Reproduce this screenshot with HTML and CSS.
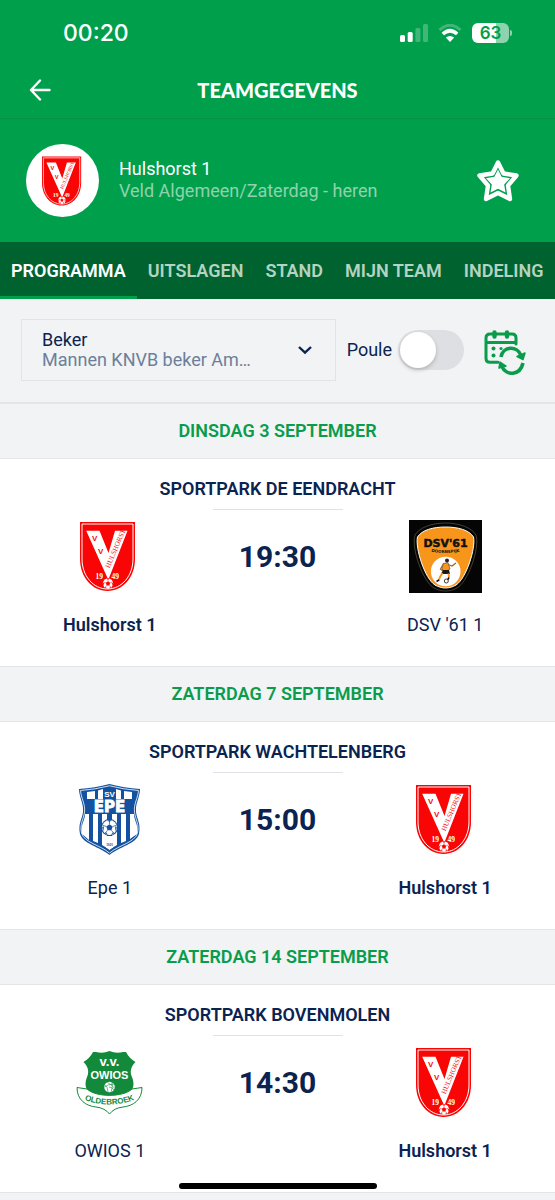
FILE: index.html
```html
<!DOCTYPE html>
<html lang="nl">
<head>
<meta charset="utf-8">
<meta name="viewport" content="width=device-width, initial-scale=1">
<title>Teamgegevens</title>
<link rel="stylesheet" href="styles.css">
</head>
<body>
<svg class="defs" aria-hidden="true">
  <defs>
    <g id="ball">
      <circle r="5.4" fill="#fff"/>
      <path d="M0-2.4 2.3-.7 1.4 2H-1.4L-2.3-.7Z" fill="currentColor"/>
      <path d="M0-5.4V-2.4M5.1-1.7 2.3-.7M3.2 4.4 1.4 2M-3.2 4.4-1.4 2M-5.1-1.7-2.3-.7" stroke="currentColor" stroke-width=".5"/>
      <path d="M-1.8-5.2h3.6L0-4ZM5.3-.2 4.4 2.8 4-.9ZM-5.3-.2-4.4 2.8-4-.9ZM1 5.3 3.6 4 2.6 3.4ZM-1 5.3-3.6 4-2.6 3.4Z" fill="currentColor"/>
    </g>
    <symbol id="hulshorst" viewBox="0 0 73 73">
      <path d="M7 2H62V39C62 57 50 71 34.500 71C19 71 7 57 7 39Z" fill="#f90505"/>
      <path d="M9 4H60V39C60 55.500 49 69 34.500 69C20 69 9 55.500 9 39Z" fill="none" stroke="#fff" stroke-width="1"/>
      <path d="M13.200 10.700H26.500L35.500 33 42 10.700H54.500L36 58H34.500Z" fill="#fff"/>
      <g fill="#f90505" class="crest-sans">
        <text x="19" y="21" font-size="8">V</text>
        <text x="25" y="34" font-size="8">V</text>
        <text class="crest-narrow" font-size="7" transform="translate(36.500 48.500) rotate(-67)">HULSHORST</text>
      </g>
      <g fill="#fff" class="crest-serif" font-size="7.500">
        <text x="22.500" y="58.500">19</text><text x="38.500" y="58.500">49</text>
      </g>
      <g transform="translate(35 63.500)" color="#f90505"><use href="#ball" transform="scale(.95)"/></g>
    </symbol>
    <symbol id="dsv" viewBox="0 0 73 73">
      <path d="M0 0H73V73H0Z" fill="#050505"/>
      <path d="M6 15C10 8 22 3 36.500 3S63 8 67 15C71 28 59 62 48 68C41 72 32 72 25 68C14 62 2 28 6 15Z" fill="#050505" stroke="#8a7a5a" stroke-width=".5"/>
      <path d="M8.500 17C13 10 24 7 36.500 7S60 10 64.500 17C67 28 57 59 47 65C40 69 33 69 26 65C16 59 6 28 8.500 17Z" fill="#f8961c" stroke="#fff" stroke-width="1"/>
      <circle cx="36.700" cy="51.500" r="14.800" fill="#fff"/>
      <text class="crest-wide" x="36.500" y="26.500" font-size="11" text-anchor="middle" fill="#111" stroke="#111" stroke-width=".5">DSV'61</text>
      <path id="dsv-arc" d="M15 30Q36.500 36 58 30" fill="none"/>
      <text class="crest-wide" font-size="4" text-anchor="middle" fill="#111"><textPath href="#dsv-arc" startOffset="50%">DOORNSPIJK</textPath></text>
      <circle cx="38" cy="40.500" r="2" fill="#222"/>
      <path d="M34 43.500 39 42.500 41 49 36 52 33 49Z" fill="#f8961c" stroke="#222" stroke-width=".5"/>
      <path d="M39 44.500 43 46 47 43M34 44.500 31.500 49 34 51" fill="none" stroke="#a3661e" stroke-width="1.300"/>
      <path d="M34 50 40 50 41 54 36 54 32 54Z" fill="#181818"/>
      <path d="M33.500 53 31 57 29.500 61M39.500 53.500 40 57.500" fill="none" stroke="#f8961c" stroke-width="2"/>
      <path d="M30 60 27.500 61.500M40 57.500 38.500 60" stroke="#111" stroke-width="1.500"/>
      <circle cx="37.300" cy="61" r="2" fill="#fff" stroke="#111" stroke-width=".8"/>
    </symbol>
    <symbol id="epe" viewBox="0 0 73 73">
      <path d="M6 6Q22 5 36.500 1Q51 5 67 6C67 14 62 21 63 29C64 37 68 40 66 51C63 61 46 64 36.500 72C27 64 10 61 7 51C5 40 9 37 10 29C11 21 6 14 6 6Z" fill="#14529f"/>
      <path d="M14 9 22 8V16H14ZM25 7.500 30 6V16H25ZM43 6 48 7.500V16H43ZM51 8 59 9V16H51Z" fill="#fff"/>
      <path d="M12 31H16V57L9 51C7 42 12 38 12 31ZM20 31H25V60L20 58ZM29 31H34V65L29 62ZM39 31H44V62L39 65ZM48 31H53V58L48 60ZM57 31H61C61 38 66 42 64 51L57 56Z" fill="#fff"/>
      <path d="M10 16H63V31H10Z" fill="#14529f"/>
      <path d="M33 53H40V64.500L36.500 67 33 64.500Z" fill="#fff"/>
      <path d="M7.500 7.500Q22 6.500 36.500 2.800Q51 6.500 65.500 7.500C65 15 60.500 21 61.500 29C62.500 37 66.500 41 64.500 50C62 59.500 46 62 36.500 70C27 62 11 59.500 8.500 50C6.500 41 10.500 37 11.500 29C12.500 21 8 15 7.500 7.500Z" fill="none" stroke="#fff" stroke-width=".8"/>
      <text class="crest-sans" x="36.500" y="13.500" font-size="8" text-anchor="middle" fill="#fff">SV</text>
      <text class="crest-wide" x="36.500" y="29" font-size="15" text-anchor="middle" fill="#fff" stroke="#fff" stroke-width=".8">EPE</text>
      <circle cx="36.500" cy="44.500" r="8.500" fill="#14529f"/>
      <g transform="translate(36.500 44.500)" color="#14529f"><use href="#ball" transform="scale(1.380)"/></g>
      <text class="crest-sans" x="36.500" y="63" font-size="3" text-anchor="middle" fill="#14529f">1920</text>
    </symbol>
    <symbol id="owios" viewBox="0 0 73 73">
      <path d="M23 6Q30 8 36.500 5Q43 8 50 6L53 6Q56 12 62.500 16C57 21 57 27 59 31C61 36 61 40 59 44L36.500 60 14 44C12 40 12 36 14 31C16 27 16 21 10.500 16Q17 12 20 6Z" fill="#138a3b"/>
      <path d="M4 41.500 14 43C23 51.500 50 51.500 59 43L69 41.500C69 54 60 60 50 61Q41 62 36.500 68Q32 62 23 61C13 60 4 54 4 41.500Z" fill="#fff" stroke="#138a3b" stroke-width="1"/>
      <g fill="#fff" class="crest-sans" text-anchor="middle">
        <text x="36.500" y="19.500" font-size="13">v.v.</text>
        <text x="36.500" y="32.500" font-size="11">OWIOS</text>
      </g>
      <circle cx="36.500" cy="41" r="5.300" fill="#fff"/>
      <path d="M31.500 41Q35 38 41 38M35 46Q35 41 31.500 38.500M38 46Q40 42 39 36M34.500 36.500Q38 38 41.500 42M36 41Q39 41 41 44" fill="none" stroke="#138a3b" stroke-width=".6"/>
      <path id="owios-arc" d="M7 51C22 61 51 61 66 51" fill="none"/>
      <text class="crest-sans" font-size="8" text-anchor="middle" fill="#138a3b"><textPath href="#owios-arc" startOffset="50%">OLDEBROEK</textPath></text>
    </symbol>
  </defs>
</svg>

<header class="top">
  <div class="status">
    <span class="clock">00:20</span>
    <div class="status-icons">
      <svg width="28" height="18" viewBox="0 0 28 18" fill="#fff" aria-hidden="true">
        <rect y="11" width="5" height="7" rx="1.500"/><rect x="7.700" y="8" width="5" height="10" rx="1.500"/>
        <g opacity=".25"><rect x="15.400" y="4" width="5" height="14" rx="1.500"/><rect x="23" width="5" height="18" rx="1.500"/></g>
      </svg>
      <svg width="24" height="18" viewBox="0 0 24 18" fill="none" stroke="#fff" aria-hidden="true">
        <path d="M1.500 6Q12-3.500 22.500 6" stroke-width="3" opacity=".25"/>
        <path d="M4.800 10Q12 3.500 19.200 10" stroke-width="3.600"/>
        <path d="M12 18 7.800 13.600Q12 10.500 16.200 13.600Z" fill="#fff" stroke="none"/>
      </svg>
      <span class="battery"><span class="battery-body">63</span><span class="battery-tip"></span></span>
    </div>
  </div>
  <div class="titlebar">
    <button class="icon-button" aria-label="Terug">
      <svg width="22" height="22" viewBox="0 0 22 22" fill="none" stroke="#fff" stroke-width="2.400" stroke-linecap="round" stroke-linejoin="round"><path d="M20.500 11H2M11 1.500 2 11 11 20.500"/></svg>
    </button>
    <h1>TEAMGEGEVENS</h1>
  </div>
  <div class="team-head">
    <span class="avatar"><svg class="avatar-crest"><use href="#hulshorst"/></svg></span>
    <div class="team-info">
      <p>Hulshorst 1</p>
      <p class="muted">Veld Algemeen/Zaterdag - heren</p>
    </div>
    <button class="icon-button" aria-label="Favoriet">
      <svg width="42" height="42" viewBox="0 0 42 42" stroke-linejoin="round">
        <path d="M21 2.500 26.500 13.500 39.500 15.500 31 25.500 33 39 21 33 9 39 11 25.500 2.500 15.500 15.500 13.500Z" fill="none" stroke="#fff" stroke-width="4.400"/>
        <path d="M21 9.500 24.600 16.800 33 18.200 27.200 24.400 28.500 32.500 21 28.700 13.500 32.500 14.800 24.400 9 18.200 17.400 16.800Z" fill="#fff"/>
      </svg>
    </button>
  </div>
</header>

<nav class="tabs">
  <a href="#programma" class="tab active" aria-current="page">PROGRAMMA</a>
  <a href="#uitslagen" class="tab">UITSLAGEN</a>
  <a href="#stand" class="tab">STAND</a>
  <a href="#mijn-team" class="tab">MIJN TEAM</a>
  <a href="#indeling" class="tab">INDELING</a>
</nav>

<main>
  <div class="filters">
    <div class="picker">
      <div class="picker-text">
        <label for="competition">Beker</label>
        <select id="competition"><option>Mannen KNVB beker Am…</option></select>
      </div>
      <svg width="14" height="10" viewBox="0 0 14 10" fill="none" stroke="#0a2351" stroke-width="2.400" aria-hidden="true"><path d="M1 2 7 7.700 13 2"/></svg>
    </div>
    <label class="poule">Poule <input type="checkbox" role="switch" class="switch"></label>
    <button class="icon-button sync" aria-label="Agenda synchroniseren">
      <svg width="42" height="45" viewBox="0 0 42 45" fill="none" stroke="#0a9c4b" stroke-width="3" stroke-linecap="round" stroke-linejoin="round">
        <path d="M14 32.300H6Q2 32.300 2 28.300V8Q2 4 6 4H28Q32 4 32 8V14M2 12.500H32"/>
        <path d="M10.500 2.500V6.500M23 2.500V6.500" stroke-width="4.400"/>
        <g fill="#0a9c4b" stroke="none"><circle cx="9.500" cy="18.500" r="2"/><circle cx="9.500" cy="25.500" r="2"/><circle cx="17" cy="18.500" r="1.600"/></g>
        <path d="M17 27C19 15.500 33.500 15.500 37 25.500M39 33C36 46 22 46 18 36.500" stroke-width="3.600" stroke-linecap="butt"/>
        <path d="M41 23 39 29.500 33 26.500ZM16 32 22 36 15 38Z" fill="#0a9c4b" stroke-width="1.500"/>
      </svg>
    </button>
  </div>

  <section>
    <h2 class="day">DINSDAG 3 SEPTEMBER</h2>
    <article class="match">
      <h3 class="venue">SPORTPARK DE EENDRACHT</h3>
      <div class="fixture">
        <div class="club own"><svg class="crest"><use href="#hulshorst"/></svg><span>Hulshorst 1</span></div>
        <time class="kickoff">19:30</time>
        <div class="club"><svg class="crest"><use href="#dsv"/></svg><span>DSV '61 1</span></div>
      </div>
    </article>
  </section>
  <section>
    <h2 class="day">ZATERDAG 7 SEPTEMBER</h2>
    <article class="match">
      <h3 class="venue">SPORTPARK WACHTELENBERG</h3>
      <div class="fixture">
        <div class="club"><svg class="crest"><use href="#epe"/></svg><span>Epe 1</span></div>
        <time class="kickoff">15:00</time>
        <div class="club own"><svg class="crest"><use href="#hulshorst"/></svg><span>Hulshorst 1</span></div>
      </div>
    </article>
  </section>
  <section>
    <h2 class="day">ZATERDAG 14 SEPTEMBER</h2>
    <article class="match">
      <h3 class="venue">SPORTPARK BOVENMOLEN</h3>
      <div class="fixture">
        <div class="club"><svg class="crest"><use href="#owios"/></svg><span>OWIOS 1</span></div>
        <time class="kickoff">14:30</time>
        <div class="club own"><svg class="crest"><use href="#hulshorst"/></svg><span>Hulshorst 1</span></div>
      </div>
    </article>
  </section>
</main>
<div class="home-indicator"></div>
</body>
</html>
```
FILE: styles.css
```css
* { box-sizing: border-box; }

body {
  margin: 0;
  background: #f1f3f5;
  color: #0a2351;
  font: 400 18px/22px Roboto, "Noto Sans", sans-serif;
}

h1, h2, h3, p { margin: 0; }

.defs { position: absolute; width: 0; height: 0; }

.icon-button {
  display: flex;
  padding: 0;
  border: 0;
  background: none;
  cursor: pointer;
}

.top { background: #009f4c; color: #fff; }

.status {
  display: flex;
  align-items: center;
  justify-content: space-between;
  height: 62px;
  padding: 4px 43px 0 63px;
}

.clock { font: 500 23px/28px Inter, sans-serif; }

.status-icons { display: flex; align-items: center; gap: 10px; }

.battery { display: flex; align-items: center; gap: 1px; }

.battery-body {
  width: 37px;
  border-radius: 6px;
  background: linear-gradient(90deg, #fff 64%, #8fd3ac 64%);
  color: #009f4c;
  font: 600 17px/20px Inter, sans-serif;
  text-align: center;
}

.battery-tip {
  width: 2px;
  height: 6px;
  border-radius: 0 2px 2px 0;
  background: #8fd3ac;
}

.titlebar {
  display: grid;
  grid-template-columns: 1fr auto 1fr;
  align-items: center;
  height: 57px;
  padding: 0 29px;
  border-bottom: 1px solid #079347;
}

.titlebar h1 { font: 900 20px/24px Lato, sans-serif; }

.team-head {
  display: flex;
  align-items: center;
  height: 123px;
  padding: 0 36px 0 26px;
}

.avatar {
  display: grid;
  place-items: center;
  width: 73px;
  height: 73px;
  border-radius: 50%;
  background: #fff;
}

.avatar-crest { width: 52px; height: 52px; }

.team-info { flex: 1; padding: 0 0 2px 20px; }

.muted { color: #8fd3ac; }

.tabs {
  display: flex;
  height: 57px;
  overflow: hidden;
  background: #00632f;
}

.tab {
  padding: 18px 11px 14px;
  border-bottom: 3px solid transparent;
  color: #b5d3c1;
  font-weight: 600;
  text-decoration: none;
  white-space: nowrap;
}

.tab.active { border-color: #009f4c; color: #fff; }

.filters {
  display: flex;
  align-items: center;
  padding: 20px 29px 21px 21px;
  border-bottom: 2px solid #e3e5e9;
}

.picker {
  display: flex;
  flex: 1;
  align-items: center;
  min-width: 0;
  height: 62px;
  padding: 0 23px 0 20px;
  border: 1px solid #e0e3e7;
}

.picker-text { display: flex; flex: 1; flex-direction: column; line-height: 20px; }

.picker select {
  width: 100%;
  padding: 0;
  border: 0;
  appearance: none;
  background: none;
  color: #6e7f9b;
  font: inherit;
}

.poule { display: flex; align-items: center; gap: 6px; padding-left: 11px; }

.switch {
  width: 66px;
  height: 40px;
  margin: 0;
  padding: 2px;
  border-radius: 20px;
  appearance: none;
  background: #dedfe2;
}

.switch::before {
  display: block;
  width: 36px;
  height: 36px;
  border-radius: 50%;
  background: #fff;
  box-shadow: 0 2px 4px #0003;
  content: "";
}

.switch:checked { background: #009f4c; }
.switch:checked::before { margin-left: auto; }

.sync { padding: 4px 0 0 20px; }

.day {
  padding: 16px 0;
  border-bottom: 1px solid #e3e5e9;
  color: #0a9c4b;
  font-size: 18px;
  font-weight: 600;
  text-align: center;
}

.match {
  padding: 19px 26px 30px;
  border-bottom: 1px solid #e3e5e9;
  background: #fff;
}

.venue {
  font-size: 18px;
  font-weight: 600;
  text-align: center;
}

.venue::after {
  display: block;
  width: 130px;
  height: 1px;
  margin: 9px auto 10px;
  background: #dfe2e8;
  content: "";
}

.fixture { display: grid; grid-template-columns: repeat(3, 1fr); }

.club {
  display: flex;
  flex-direction: column;
  align-items: center;
  gap: 21px;
}

.own { font-weight: 600; }

.crest { width: 73px; height: 73px; }

.kickoff {
  font-size: 30px;
  font-weight: 700;
  line-height: 73px;
  text-align: center;
}

.crest-sans { font-family: "Liberation Sans", sans-serif; font-weight: 700; }
.crest-serif { font-family: "Liberation Serif", serif; font-weight: 700; }
.crest-narrow { font-family: "Liberation Sans Narrow", "Liberation Serif", serif; font-weight: 400; }
.crest-wide { font-family: "DejaVu Sans", sans-serif; font-weight: 700; }

.home-indicator {
  position: fixed;
  bottom: 11px;
  left: 50%;
  width: 198px;
  height: 6px;
  border-radius: 3px;
  background: #000;
  transform: translateX(-50%);
}
```
